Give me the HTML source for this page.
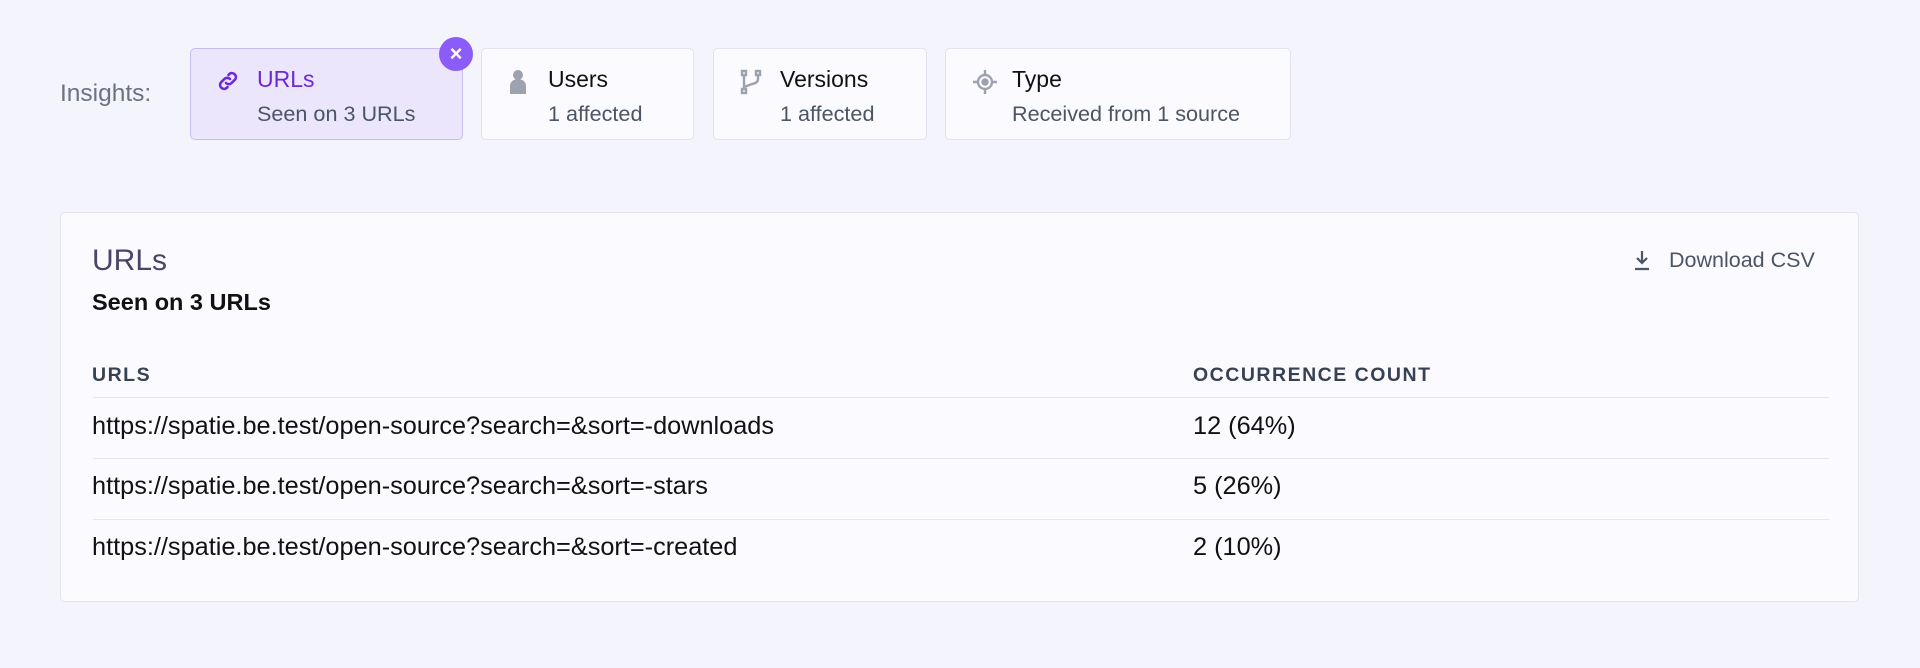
<!DOCTYPE html>
<html><head><style>
*{box-sizing:border-box;margin:0;padding:0}
body{width:1920px;height:668px;background:#f4f4fd;font-family:"Liberation Sans",sans-serif;position:relative;overflow:hidden}
.lbl{position:absolute;left:60px;top:80px;font-size:24.5px;color:#6b7280}
.card{position:absolute;top:48px;height:92px;background:#fafaff;border:1px solid #e3e3ef;border-radius:5px}
.card .t{position:absolute;top:17px;font-size:23px;color:#111;}
.card .s{position:absolute;top:52px;font-size:21.6px;color:#4b5563}
.card svg{position:absolute;top:20px}
.active{background:#ebe6fb;border-color:#c9bcf0}
.active .t{color:#6d28d9}
.x{position:absolute;left:439px;top:37px;width:34px;height:34px;border-radius:50%;background:#8b5cf6;color:#fff;text-align:center;line-height:34px;font-size:22px;font-weight:bold}
.panel{position:absolute;left:60px;top:212px;width:1799px;height:390px;background:#fbfbff;border:1px solid #e4e4ee;border-radius:5px}
.h{position:absolute;left:31px;top:31px;font-size:30px;color:#4a4468}
.sub{position:absolute;left:31px;top:76px;font-size:23.5px;font-weight:bold;color:#111}
.dl{position:absolute;left:1608px;top:35px;font-size:21.5px;color:#4b5563}
.th{position:absolute;top:151px;font-size:19.5px;font-weight:bold;color:#374151;letter-spacing:1.5px}
.line{position:absolute;left:32px;width:1736px;height:1px;background:#e6e6ef}
.td{position:absolute;font-size:25.3px;color:#111}
</style></head><body>
<div class="lbl">Insights:</div>
<div class="card active" style="left:190px;width:273px">
<svg style="left:23px" width="28" height="24" viewBox="0 0 24 24" fill="none" stroke="#6d28d9" stroke-width="2.6" stroke-linecap="round"><path d="M10 14a4 4 0 0 0 5.6 0l3.5-3.5a4 4 0 0 0-5.6-5.6l-1 1"/><path d="M14 10a4 4 0 0 0-5.6 0l-3.5 3.5a4 4 0 0 0 5.6 5.6l1-1"/></svg>
<div class="t" style="left:66px">URLs</div><div class="s" style="left:66px">Seen on 3 URLs</div></div>
<div class="x">×</div>
<div class="card" style="left:481px;width:213px">
<svg style="left:26px" width="20" height="26" viewBox="0 0 20 26" fill="#9ca3af"><circle cx="10" cy="6" r="5"/><path d="M2 25v-8a8 7 0 0 1 16 0v8z"/></svg>
<div class="t" style="left:66px">Users</div><div class="s" style="left:66px">1 affected</div></div>
<div class="card" style="left:713px;width:214px">
<svg style="left:26px" width="22" height="26" viewBox="0 0 22 26" fill="none" stroke="#9ca3af" stroke-width="2.4"><rect x="2" y="2" width="4" height="4"/><rect x="16" y="2" width="4" height="4"/><rect x="2" y="20" width="4" height="4"/><path d="M4 6v14M18 6v4q0 4-6 5l-8 3"/></svg>
<div class="t" style="left:66px">Versions</div><div class="s" style="left:66px">1 affected</div></div>
<div class="card" style="left:945px;width:346px">
<svg style="left:26px" width="26" height="26" viewBox="0 0 26 26" fill="none" stroke="#9ca3af" stroke-width="2.4"><circle cx="13" cy="13" r="7"/><circle cx="13" cy="13" r="2.5" fill="#9ca3af"/><path d="M13 1v5M13 20v5M1 13h5M20 13h5"/></svg>
<div class="t" style="left:66px">Type</div><div class="s" style="left:66px">Received from 1 source</div></div>

<div class="panel">
<div class="h">URLs</div>
<div class="sub">Seen on 3 URLs</div>
<svg style="position:absolute;left:1572px;top:36px" width="18" height="22" viewBox="0 0 18 22" fill="none" stroke="#4b5563" stroke-width="2.2"><path d="M9 2v12M4 9l5 5 5-5M2 20h14"/></svg>
<div class="dl">Download CSV</div>
<div class="th" style="left:31px">URLS</div>
<div class="th" style="left:1132px">OCCURRENCE COUNT</div>
<div class="line" style="top:184px"></div>
<div class="td" style="left:31px;top:199px">https://spatie.be.test/open-source?search=&amp;sort=-downloads</div>
<div class="td" style="left:1132px;top:199px">12 (64%)</div>
<div class="line" style="top:245px"></div>
<div class="td" style="left:31px;top:259px">https://spatie.be.test/open-source?search=&amp;sort=-stars</div>
<div class="td" style="left:1132px;top:259px">5 (26%)</div>
<div class="line" style="top:306px"></div>
<div class="td" style="left:31px;top:320px">https://spatie.be.test/open-source?search=&amp;sort=-created</div>
<div class="td" style="left:1132px;top:320px">2 (10%)</div>
</div>
</body></html>
